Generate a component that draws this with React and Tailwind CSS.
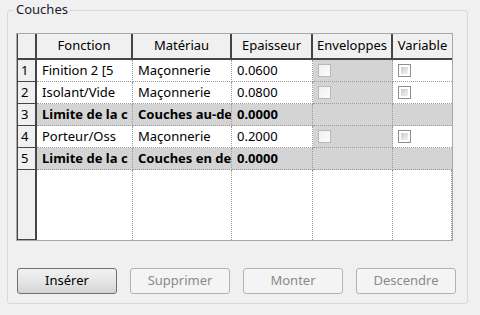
import React from 'react';

const cols = [
  { key: 'fn', label: 'Fonction', w: 'w-[96px]' },
  { key: 'mat', label: 'Matériau', w: 'w-[99px]' },
  { key: 'ep', label: 'Epaisseur', w: 'w-[81px]' },
  { key: 'env', label: 'Enveloppes', w: 'w-[80px]' },
  { key: 'var', label: 'Variable', w: 'w-[59px]' },
];

const rows = [
  { n: 1, fn: 'Finition 2 [5', mat: 'Maçonnerie', ep: '0.0600', box: true },
  { n: 2, fn: 'Isolant/Vide', mat: 'Maçonnerie', ep: '0.0800', box: true },
  { n: 3, fn: 'Limite de la c', mat: 'Couches au-de', ep: '0.0000', limit: true },
  { n: 4, fn: 'Porteur/Oss', mat: 'Maçonnerie', ep: '0.2000', box: true },
  { n: 5, fn: 'Limite de la c', mat: 'Couches en de', ep: '0.0000', limit: true },
];

function DisabledBox() {
  return <div className="w-[13px] h-[13px] border border-[#b8b8b8] bg-gradient-to-br from-[#f0f0f0] to-[#fcfcfc]" />;
}

function CheckBox() {
  return (
    <div className="w-[13px] h-[13px] border border-[#8f8f8f] bg-white p-[2px]">
      <div className="w-full h-full bg-gradient-to-br from-[#cbcbcb] to-[#f4f4f4]" />
    </div>
  );
}

function Cell({ w, children, bg, bold, last }) {
  return (
    <div
      className={`${w} h-full flex items-center pl-[5px] overflow-hidden whitespace-nowrap border-b border-dotted border-[#9a9a9a] ${last ? '' : 'border-r'} ${bg} ${bold ? 'font-bold' : ''}`}
    >
      {children}
    </div>
  );
}

function Button({ label, enabled }) {
  return (
    <button
      className={`w-[100px] h-[26px] rounded-[3px] border text-[13px] ${
        enabled
          ? 'border-[#707070] bg-gradient-to-b from-[#f2f2f2] via-[#e6e6e6] to-[#d4d4d4] text-black'
          : 'border-[#b0b4b7] bg-[#f4f4f4] text-[#8a8a8a]'
      }`}
    >
      {label}
    </button>
  );
}

export default function App() {
  return (
    <div
      className="w-[480px] h-[315px] bg-[#f0f0f0] pt-[10px] pl-[7px] text-[13px] text-black"
      style={{ fontFamily: '"Noto Sans", "DejaVu Sans", sans-serif' }}
    >
      <div className="relative w-[461px] h-[294px] rounded-[3px] border border-[#d5dadd] pt-[22px] pl-[8px]">
        <span className="absolute -top-[10px] left-[6px] px-[2px] bg-[#f0f0f0] leading-[17px] text-[#1a1a2e]">
          Couches
        </span>

        {/* Grid */}
        <div className="w-[437px] border border-[#a8a8a8] bg-white">
          {/* Header */}
          <div className="flex h-[26px] border-b-2 border-[#454545] bg-[#f0f0f0]">
            <div className="w-[20px] h-full border-r-2 border-[#454545] border-l border-l-[#454545]" />
            {cols.map((c, i) => (
              <div
                key={c.key}
                className={`${c.w} h-full flex items-center justify-center whitespace-nowrap ${
                  i < cols.length - 1 ? 'border-r-2 border-[#454545]' : ''
                }`}
              >
                {c.label}
              </div>
            ))}
          </div>

          {rows.map((r) => {
            const rowBg = r.limit ? 'bg-[#d4d4d4]' : 'bg-white';
            return (
              <div key={r.n} className="flex h-[22px]">
                <div className="w-[20px] h-full flex items-center pl-[3px] text-black bg-[#f0f0f0] border-l border-r-2 border-b border-[#454545]">
                  <span>{r.n}</span>
                </div>
                <Cell w="w-[96px]" bg={rowBg} bold={r.limit}>{r.fn}</Cell>
                <Cell w="w-[99px]" bg={rowBg} bold={r.limit}>{r.mat}</Cell>
                <Cell w="w-[81px]" bg={rowBg} bold={r.limit}>{r.ep}</Cell>
                <Cell w="w-[80px]" bg="bg-[#d4d4d4]">
                  {r.box && <DisabledBox />}
                </Cell>
                <Cell w="w-[59px]" bg={rowBg} last>
                  {r.box && <CheckBox />}
                </Cell>
              </div>
            );
          })}

          {/* Empty area */}
          <div className="flex h-[70px]">
            <div className="w-[20px] h-full bg-[#f0f0f0] border-l border-r-2 border-b border-[#454545]" />
            <div className="w-[96px] h-full border-r border-dotted border-[#9a9a9a]" />
            <div className="w-[99px] h-full border-r border-dotted border-[#9a9a9a]" />
            <div className="w-[81px] h-full border-r border-dotted border-[#9a9a9a]" />
            <div className="w-[80px] h-full border-r border-dotted border-[#9a9a9a]" />
            <div className="w-[59px] h-full border-r border-dotted border-[#9a9a9a]" />
          </div>
        </div>

        {/* Buttons */}
        <div className="flex gap-[13px] mt-[27px] pl-[1px]">
          <Button label="Insérer" enabled />
          <Button label="Supprimer" />
          <Button label="Monter" />
          <Button label="Descendre" />
        </div>
      </div>
    </div>
  );
}
